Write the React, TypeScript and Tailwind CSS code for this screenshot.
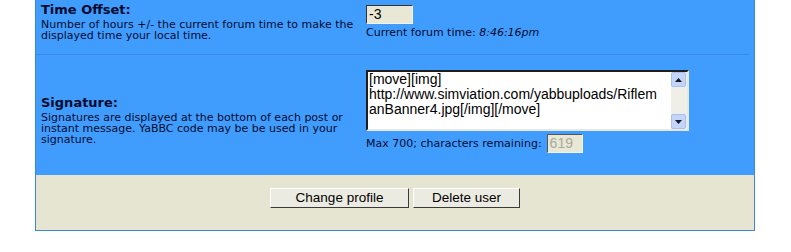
import React from 'react';

const sigLines = [
  '[move][img]',
  'http://www.simviation.com/yabbuploads/Riflem',
  'anBanner4.jpg[/img][/move]',
];

const ScrollButton: React.FC<{ up?: boolean }> = ({ up }) => (
  <div className="w-[15px] h-[15px] bg-[#c4d5fb] border border-[#a9bff0] rounded-[2px] flex items-center justify-center">
    <svg width="7" height="4" viewBox="0 0 7 4">
      {up ? <polygon points="0,4 7,4 3.5,0" fill="#1a1a1a" /> : <polygon points="0,0 7,0 3.5,4" fill="#1a1a1a" />}
    </svg>
  </div>
);

const App: React.FC = () => {
  return (
    <div className="w-[791px] h-[252px] bg-white font-['DejaVu_Sans',sans-serif] text-[#000a2e]">
      <div className="ml-[35px] w-[720px] border-x border-b border-[#3a87de]">
        <div className="bg-[#409dfe]">
          <div className="flex h-[54px]">
            <div className="w-[326px] pl-[5px] pt-[2px]">
              <div className="text-[13px] leading-[15px] font-bold">Time Offset:</div>
              <div className="text-[11px] leading-[11px] mt-[2px]">
                Number of hours +/- the current forum time to make the displayed time your local time.
              </div>
            </div>
            <div className="pl-[4px] pt-[5px]">
              <div className="w-[47px] h-[19px] bg-[#e9e7d5] border-t border-l border-t-[#333] border-l-[#333] border-b border-r border-b-[#f4f4ee] border-r-[#f4f4ee] font-['Liberation_Sans',sans-serif] text-[14px] leading-[17px] text-black pl-[2px]">
                -3
              </div>
              <div className="text-[11px] leading-[12px] mt-[3px]">
                Current forum time: <i>8:46:16pm</i>
              </div>
            </div>
          </div>
          <div className="mr-[5px] h-px bg-[#3b8be6]" />
          <div className="flex h-[120px]">
            <div className="w-[326px] pl-[5px] pt-[40px]">
              <div className="text-[13px] leading-[15px] font-bold">Signature:</div>
              <div className="text-[11px] leading-[11px] mt-[2px]">
                Signatures are displayed at the bottom of each post or instant message. YaBBC code may be be used in your
                signature.
              </div>
            </div>
            <div className="pl-[4px] pt-[15px]">
              <div className="w-[323px] h-[61px] bg-white border-2 border-t-[#1e1e1e] border-l-[#1e1e1e] border-r-[#e8e8e0] border-b-[#e8e8e0] flex">
                <div className="flex-1 pl-[1px] font-['Liberation_Sans',sans-serif] text-[14px] leading-[15px] text-black whitespace-nowrap overflow-hidden">
                  {sigLines.map((l) => (
                    <div key={l}>{l}</div>
                  ))}
                </div>
                <div className="w-[16px] bg-[#efefe8] flex flex-col justify-between">
                  <ScrollButton up />
                  <ScrollButton />
                </div>
              </div>
              <div className="flex items-center mt-[3px] gap-[5px]">
                <span className="text-[11px] leading-[12px]">Max 700; characters remaining:</span>
                <div className="w-[36px] h-[19px] bg-[#e9e7d5] border-t border-l border-t-[#555] border-l-[#555] border-b border-r border-b-[#f4f4ee] border-r-[#f4f4ee] font-['Liberation_Sans',sans-serif] text-[14px] leading-[17px] text-[#a9a99c] pl-[2px]">
                  619
                </div>
              </div>
            </div>
          </div>
        </div>
        <div className="bg-[#e6e5d1] h-[55px] flex justify-center gap-[4px] pt-[13px] font-['Liberation_Sans',sans-serif] text-[13.5px] text-black">
          <button className="w-[139px] h-[20px] bg-[#ecebe2] border border-t-white border-l-white border-r-[#3a3a3a] border-b-[#3a3a3a] leading-[18px]">
            Change profile
          </button>
          <button className="w-[107px] h-[20px] bg-[#ecebe2] border border-t-white border-l-white border-r-[#3a3a3a] border-b-[#3a3a3a] leading-[18px]">
            Delete user
          </button>
        </div>
      </div>
    </div>
  );
};

export default App;
